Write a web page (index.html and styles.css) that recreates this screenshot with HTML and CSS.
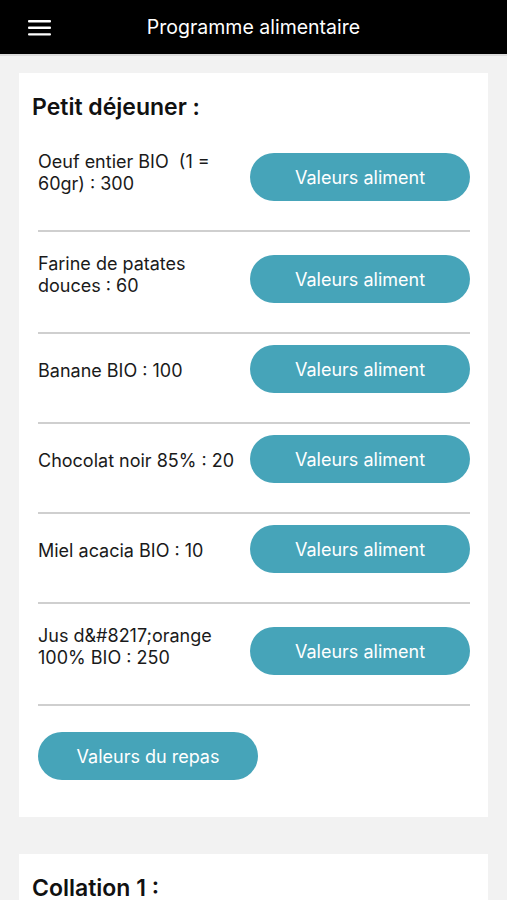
FILE: index.html
```html
<!DOCTYPE html>
<html lang="fr">
<head>
  <meta charset="UTF-8">
  <meta name="viewport" content="width=device-width, initial-scale=1.0">
  <title>Programme alimentaire</title>
  <link rel="stylesheet" href="styles.css">
</head>
<body>
  <header class="topbar">
    <button class="menu-btn" aria-label="Menu">
      <svg width="24" height="18" viewBox="0 0 24 18">
        <rect x="0" y="1" width="23" height="2.4" rx="1" fill="#fff"/>
        <rect x="0" y="7.6" width="23" height="2.4" rx="1" fill="#fff"/>
        <rect x="0" y="14.2" width="23" height="2.4" rx="1" fill="#fff"/>
      </svg>
    </button>
    <h1 class="topbar-title">Programme alimentaire</h1>
  </header>

  <main class="content">
    <section class="meal-card">
      <h2 class="meal-title">Petit déjeuner :</h2>

      <div class="food-row">
        <p class="food-name">Oeuf entier BIO&nbsp; (1 = 60gr) : 300</p>
        <button class="pill-btn">Valeurs aliment</button>
      </div>
      <div class="food-row">
        <p class="food-name">Farine de patates douces : 60</p>
        <button class="pill-btn">Valeurs aliment</button>
      </div>
      <div class="food-row">
        <p class="food-name">Banane BIO : 100</p>
        <button class="pill-btn">Valeurs aliment</button>
      </div>
      <div class="food-row">
        <p class="food-name">Chocolat noir 85% : 20</p>
        <button class="pill-btn">Valeurs aliment</button>
      </div>
      <div class="food-row">
        <p class="food-name">Miel acacia BIO : 10</p>
        <button class="pill-btn">Valeurs aliment</button>
      </div>
      <div class="food-row">
        <p class="food-name">Jus d&amp;#8217;orange 100% BIO : 250</p>
        <button class="pill-btn">Valeurs aliment</button>
      </div>

      <div class="meal-footer">
        <button class="pill-btn">Valeurs du repas</button>
      </div>
    </section>

    <section class="meal-card">
      <h2 class="meal-title">Collation 1 :</h2>
    </section>
  </main>
</body>
</html>
```

FILE: styles.css
```css
body {
  margin: 0;
  background: #f2f2f2;
  font-family: Inter, "Noto Sans", Arial, sans-serif;
  color: #1c1c1c;
}

.topbar {
  height: 54px;
  background: #000;
  border-bottom: 2px solid #dcdcdc;
  display: flex;
  align-items: center;
  position: relative;
}

.menu-btn {
  background: none;
  border: 0;
  padding: 0;
  margin-left: 28px;
  margin-top: 1px;
  display: flex;
}

.topbar-title {
  position: absolute;
  left: 0;
  right: 0;
  text-align: center;
  margin: 0;
  color: #fff;
  font-size: 19.5px;
  font-weight: 400;
  pointer-events: none;
}

.content {
  padding: 17px 19px 0;
}

.meal-card {
  background: #fff;
  padding: 20px 18px 37px 19px;
  margin-bottom: 37px;
}

.meal-title {
  margin: 0 0 0 -6px;
  font-size: 23px;
  font-weight: 600;
  line-height: 28px;
  color: #111;
}

.food-row {
  display: flex;
  align-items: center;
  gap: 12px;
  padding: 11px 0 29px;
  border-bottom: 2px solid #cfcfcf;
}

.meal-title + .food-row {
  margin-top: 9px;
}

.food-name {
  flex: 1;
  margin: 0;
  padding: 10px 0 6px;
  font-size: 18px;
  line-height: 22px;
  color: #1a1a1a;
}

.pill-btn {
  flex: none;
  width: 220px;
  height: 48px;
  align-self: flex-end;
  border: 0;
  border-radius: 24px;
  background: #46a4b9;
  color: #fff;
  font-family: inherit;
  font-size: 18px;
}

.meal-footer {
  padding-top: 26px;
}
```
